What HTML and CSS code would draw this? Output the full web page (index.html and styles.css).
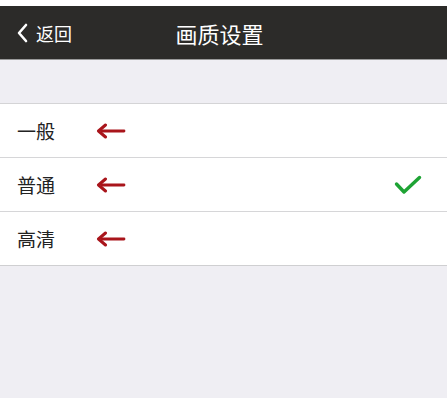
FILE: index.html
```html
<!DOCTYPE html>
<html lang="zh">
<head>
<meta charset="utf-8">
<link rel="stylesheet" href="styles.css">
</head>
<body>
<div class="top-gap"></div>
<header class="navbar">
  <div class="back">
    <svg class="chev" width="12" height="20" viewBox="0 0 12 20"><path d="M10 2 L3 10 L10 18" fill="none" stroke="#fff" stroke-width="2.6" stroke-linecap="round" stroke-linejoin="round"/></svg>
    <span class="back-text">返回</span>
  </div>
  <div class="title">画质设置</div>
</header>
<div class="spacer"></div>
<ul class="list">
  <li class="row">
    <span class="label">一般</span>
    <svg class="arrow" width="30" height="16" viewBox="0 0 30 16"><path d="M28 8 H6" stroke="#a9151b" stroke-width="2.8" stroke-linecap="round"/><path d="M9.5 2 L2.5 8 L9.5 14" fill="none" stroke="#a9151b" stroke-width="3" stroke-linecap="round" stroke-linejoin="round"/></svg>
  </li>
  <li class="row">
    <span class="label">普通</span>
    <svg class="arrow" width="30" height="16" viewBox="0 0 30 16"><path d="M28 8 H6" stroke="#a9151b" stroke-width="2.8" stroke-linecap="round"/><path d="M9.5 2 L2.5 8 L9.5 14" fill="none" stroke="#a9151b" stroke-width="3" stroke-linecap="round" stroke-linejoin="round"/></svg>
    <svg class="check" width="28" height="20" viewBox="0 0 28 20"><path d="M2.5 9 L10 17 L25.5 2.5" fill="none" stroke="#1ea334" stroke-width="3.4" stroke-linecap="round" stroke-linejoin="round"/></svg>
  </li>
  <li class="row">
    <span class="label">高清</span>
    <svg class="arrow" width="30" height="16" viewBox="0 0 30 16"><path d="M28 8 H6" stroke="#a9151b" stroke-width="2.8" stroke-linecap="round"/><path d="M9.5 2 L2.5 8 L9.5 14" fill="none" stroke="#a9151b" stroke-width="3" stroke-linecap="round" stroke-linejoin="round"/></svg>
  </li>
</ul>
</body>
</html>
```
FILE: styles.css
```css
html, body {
  margin: 0;
  padding: 0;
}
body {
  width: 447px;
  height: 398px;
  background: #efeef3;
  font-family: "Noto Sans CJK SC", "Noto Sans", sans-serif;
  overflow: hidden;
}
.top-gap {
  height: 6px;
  background: #ffffff;
}
.navbar {
  height: 53px;
  background: #2c2b29;
  display: grid;
  grid-template-columns: 1fr auto 1fr;
  align-items: center;
  color: #fff;
  border-bottom: 1px solid #9a9a9a;
}
.back {
  display: flex;
  align-items: center;
  gap: 8px;
  padding-left: 16px;
}
.back-text {
  font-size: 18px;
  line-height: 1;
}
.title {
  font-size: 22px;
  line-height: 1;
  padding-right: 8px;
}
.spacer {
  height: 43px;
}
.list {
  list-style: none;
  margin: 0;
  padding: 0;
  background: #fff;
  border-top: 1px solid #d4d4d6;
  border-bottom: 1px solid #cfcfd1;
}
.row {
  height: 53px;
  display: flex;
  align-items: center;
  padding-left: 17px;
  padding-right: 25px;
  border-bottom: 1px solid #d6d6d8;
}
.row:last-child {
  border-bottom: none;
}
.label {
  font-size: 19px;
  color: #222;
  width: 79px;
}
.arrow {
  display: block;
}
.check {
  margin-left: auto;
  display: block;
}
```
